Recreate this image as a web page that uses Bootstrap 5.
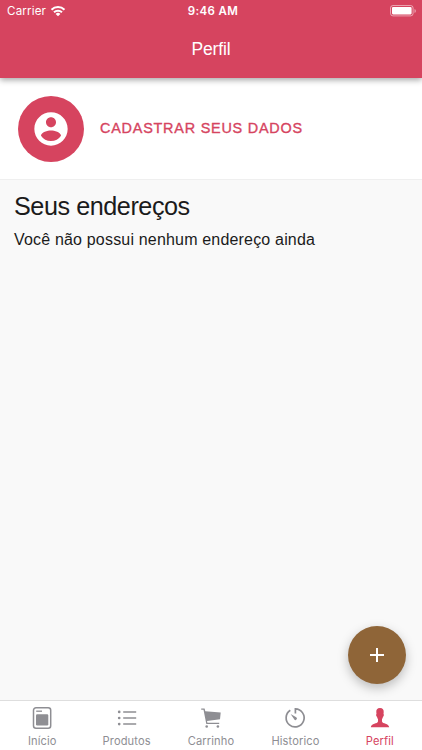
<!DOCTYPE html>
<html lang="pt-BR">
<head>
<meta charset="utf-8">
<meta name="viewport" content="width=device-width, initial-scale=1">
<title>Perfil</title>
<link href="https://cdn.jsdelivr.net/npm/bootstrap@5.3.0/dist/css/bootstrap.min.css" rel="stylesheet">
<style>
  :root { --brand: #d6445f; --idle: #8e8e93; }
  body { font-family: "Liberation Sans", Arial, sans-serif; color: #1b1b1b; background: #f9f9f9; height: 750px; }
  svg { display: block; flex: none; }
  .app-header { background: var(--brand); height: 78px; box-shadow: 0 2px 6px rgba(0,0,0,.36); z-index: 2; }
  .status-bar { height: 22px; padding: 0 5px 0 7px; font: 500 11.5px/22px Inter, sans-serif; }
  .carrier { font-weight: 400; font-size: 11.6px; letter-spacing: .16px; }
  .clock { font-weight: 600; font-size: 11.5px; letter-spacing: .4px; padding-left: 2px; }
  .page-title { font-size: 17.5px; line-height: 55px; letter-spacing: -.15px; }
  .profile-row { height: 102px; padding: 0 18px; border-bottom: 1px solid #efefef; gap: 16px; }
  .avatar { width: 66px; height: 66px; background: var(--brand); }
  .register-link { color: var(--brand); font-size: 14.4px; letter-spacing: .79px; -webkit-text-stroke: .35px var(--brand); }
  .addresses { padding: 11px 14px; }
  .addresses h1 { font-size: 25.2px; line-height: 31px; font-weight: 400; letter-spacing: -.45px; }
  .addresses p { font-size: 16px; line-height: 24px; margin-top: 6px; letter-spacing: .18px; }
  .fab { width: 58px; height: 58px; right: 16px; bottom: 66px; background: #8f6538; box-shadow: 0 4px 11px rgba(0,0,0,.25); }
  .tab-bar { height: 50px; border-top: 1px solid #dedede; font: 400 11.1px/14px Inter, sans-serif; letter-spacing: .12px; }
  .tab-bar a { color: var(--idle); padding-top: 5px; gap: 4px; flex: 1 1 0; }
  .tab-bar a.active { color: var(--brand); }
</style>
<script src="https://cdn.jsdelivr.net/npm/bootstrap@5.3.0/dist/js/bootstrap.bundle.min.js"></script>
</head>
<body class="d-flex flex-column overflow-hidden position-relative">
<header class="app-header text-white position-relative">
  <div class="status-bar row g-0">
    <div class="col d-flex align-items-center gap-1">
      <span class="carrier">Carrier</span>
      <svg width="16" height="12" viewBox="0 0 16 12" fill="none" stroke="#fff" stroke-width="2">
        <path d="M1.500 4.800a9.200 9.200 0 0 1 13 0M4 7.300a5.700 5.700 0 0 1 8 0"/>
        <path d="M8 11.300 5.600 8.900a3.400 3.400 0 0 1 4.800 0Z" fill="#fff" stroke="none"/>
      </svg>
    </div>
    <div class="col-auto clock">9:46 AM</div>
    <div class="col d-flex align-items-center justify-content-end">
      <svg width="27" height="12" viewBox="0 0 27 12">
        <rect x=".5" y=".5" width="22.600" height="10.400" rx="2.500" fill="none" stroke="#fff" stroke-opacity=".5"/>
        <rect x="2" y="2" width="19.600" height="7.400" rx="1.100" fill="#fff"/>
        <path d="M24.500 4v4q1.400-.6 1.400-2t-1.400-2" fill="#fff" fill-opacity=".5"/>
      </svg>
    </div>
  </div>
  <div class="page-title text-center">Perfil</div>
</header>
<main class="flex-grow-1">
  <section class="profile-row bg-white d-flex align-items-center">
    <div class="avatar rounded-circle d-flex align-items-center justify-content-center flex-shrink-0">
      <svg width="40" height="40" viewBox="0 0 24 24" fill="#fff"><path d="M12 2C6.480 2 2 6.480 2 12s4.480 10 10 10 10-4.480 10-10S17.520 2 12 2zm0 3c1.660 0 3 1.340 3 3s-1.340 3-3 3-3-1.340-3-3 1.340-3 3-3zm0 14.200c-2.500 0-4.710-1.280-6-3.220.030-1.990 4-3.080 6-3.080 1.990 0 5.970 1.090 6 3.080-1.290 1.940-3.500 3.220-6 3.220z"/></svg>
    </div>
    <a href="#" class="register-link text-decoration-none text-nowrap">CADASTRAR SEUS DADOS</a>
  </section>
  <section class="addresses">
    <h1 class="mb-0 text-nowrap">Seus endereços</h1>
    <p class="mb-0 text-nowrap">Você não possui nenhum endereço ainda</p>
  </section>
</main>
<button type="button" class="fab position-absolute border-0 rounded-circle d-flex align-items-center justify-content-center p-0" aria-label="Adicionar endereço">
  <svg width="16" height="16" viewBox="0 0 16 16" stroke="#fff" stroke-width="2"><path d="M8 1v14M1 8h14"/></svg>
</button>
<nav class="tab-bar bg-white d-flex text-center">
  <a href="#" class="d-flex flex-column align-items-center text-decoration-none">
    <svg width="24" height="24" viewBox="0 0 24 24" fill="none" stroke="currentColor">
      <rect x="3.500" y="1.800" width="17.200" height="20.400" rx="2.500" stroke-width="1.500"/>
      <path d="M6.200 5.200h5.800" stroke-width="1.300"/><rect x="6" y="8.200" width="12.300" height="11.300" rx="1.200" fill="currentColor" stroke="none"/>
    </svg>
    <span>Início</span>
  </a>
  <a href="#" class="d-flex flex-column align-items-center text-decoration-none">
    <svg width="24" height="24" viewBox="0 0 24 24" fill="currentColor">
      <circle cx="4.200" cy="5.900" r="1.350"/><circle cx="4.200" cy="12" r="1.350"/><circle cx="4.200" cy="18.100" r="1.350"/>
      <path d="M8.200 5.150h13v1.500h-13zM8.200 11.250h13v1.500h-13zM8.200 17.350h13v1.500h-13z"/>
    </svg>
    <span>Produtos</span>
  </a>
  <a href="#" class="d-flex flex-column align-items-center text-decoration-none">
    <svg width="24" height="24" viewBox="0 0 24 24" fill="currentColor">
      <path d="M2.200 2.500h3.400l.7 2.800 15.400 1.200-.7 6.800L8 15.100l.4 1.700h11.800v1.200H7.300L4.500 3.800H2.200z"/>
      <circle cx="7.700" cy="20.500" r="1.300"/><circle cx="18.900" cy="20.500" r="1.300"/>
    </svg>
    <span>Carrinho</span>
  </a>
  <a href="#" class="d-flex flex-column align-items-center text-decoration-none">
    <svg width="24" height="24" viewBox="0 0 24 24" fill="none" stroke="currentColor" stroke-width="1.700">
      <path d="M7.300 4.300A9 9 0 1 0 12.400 2.900V7.400"/>
      <path d="M7.600 8 13.200 11.300a1.450 1.450 0 1 1-2 2Z" fill="currentColor" stroke="none"/>
    </svg>
    <span>Historico</span>
  </a>
  <a href="#" class="active d-flex flex-column align-items-center text-decoration-none" aria-current="page">
    <svg width="24" height="24" viewBox="0 0 24 24" fill="currentColor">
      <path d="M12 2c-2.800 0-3.900 1.900-3.700 4.300l.2 1.700c-.7 0-.4 2.400.5 2.700.2 1.300.7 1.900 1 2.400v2.300c-.4 2.600-6.900 1.500-7.200 5.800h18.400c-.3-4.300-6.800-3.200-7.200-5.800v-2.300c.3-.5.8-1.100 1-2.400.9-.3 1.200-2.700.5-2.700l.2-1.700c.2-2.400-.9-4.300-3.700-4.300z"/>
    </svg>
    <span>Perfil</span>
  </a>
</nav>
</body>
</html>
